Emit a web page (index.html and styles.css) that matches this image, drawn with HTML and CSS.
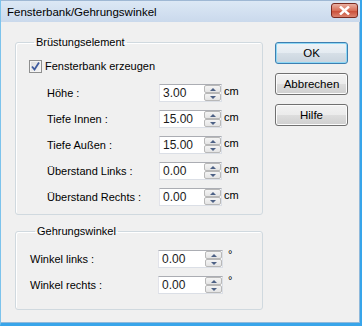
FILE: index.html
```html
<!DOCTYPE html>
<html lang="de">
<head>
  <meta charset="UTF-8" />
  <title>Fensterbank/Gehrungswinkel</title>
  <link rel="stylesheet" href="styles.css">
</head>
<body>
  <div class="window">
    <div class="titlebar">
      <span class="title">Fensterbank/Gehrungswinkel</span>
      <span class="close">
        <svg width="11" height="9" viewBox="0 0 11 9"><path d="M1 0.5 L10 8.5 M10 0.5 L1 8.5" stroke="#fff" stroke-width="2.4" /></svg>
      </span>
    </div>

    <div class="content">
      <div class="groups">
        <fieldset class="group group-main">
          <legend>Brüstungselement</legend>
          <label class="check">
            <span class="box">
              <svg width="9" height="9" viewBox="0 0 9 9"><path d="M1 4.5 L3.5 7.5 L8 0.5" fill="none" stroke="#3d5a9e" stroke-width="1.8" /></svg>
            </span>
            Fensterbank erzeugen
          </label>
          <div class="rows">
            <div class="row">
              <span class="lbl">Höhe :</span>
              <div class="spin"><span class="val">3.00</span><span class="arrows"><span class="arr up"></span><span class="arr down"></span></span></div>
              <span class="unit">cm</span>
            </div>
            <div class="row">
              <span class="lbl">Tiefe Innen :</span>
              <div class="spin"><span class="val">15.00</span><span class="arrows"><span class="arr up"></span><span class="arr down"></span></span></div>
              <span class="unit">cm</span>
            </div>
            <div class="row">
              <span class="lbl">Tiefe Außen :</span>
              <div class="spin"><span class="val">15.00</span><span class="arrows"><span class="arr up"></span><span class="arr down"></span></span></div>
              <span class="unit">cm</span>
            </div>
            <div class="row">
              <span class="lbl">Überstand Links :</span>
              <div class="spin"><span class="val">0.00</span><span class="arrows"><span class="arr up"></span><span class="arr down"></span></span></div>
              <span class="unit">cm</span>
            </div>
            <div class="row">
              <span class="lbl">Überstand Rechts :</span>
              <div class="spin"><span class="val">0.00</span><span class="arrows"><span class="arr up"></span><span class="arr down"></span></span></div>
              <span class="unit">cm</span>
            </div>
          </div>
        </fieldset>

        <fieldset class="group group-angle">
          <legend>Gehrungswinkel</legend>
          <div class="rows">
            <div class="row">
              <span class="lbl">Winkel links :</span>
              <div class="spin"><span class="val">0.00</span><span class="arrows"><span class="arr up"></span><span class="arr down"></span></span></div>
              <span class="unit deg">°</span>
            </div>
            <div class="row">
              <span class="lbl">Winkel rechts :</span>
              <div class="spin"><span class="val">0.00</span><span class="arrows"><span class="arr up"></span><span class="arr down"></span></span></div>
              <span class="unit deg">°</span>
            </div>
          </div>
        </fieldset>
      </div>

      <div class="buttons">
        <button class="btn btn-default">OK</button>
        <button class="btn">Abbrechen</button>
        <button class="btn">Hilfe</button>
      </div>
    </div>
  </div>
</body>
</html>
```

FILE: styles.css
```css
* {
  box-sizing: border-box;
}

body {
  margin: 0;
  font-family: 'Liberation Sans', Arial, sans-serif;
  font-size: 11px;
  color: #000;
  background: #f0f0f0;
}

.window {
  width: 362px;
  height: 326px;
  background: #f0f0f0;
  border-left: 1px solid #7cc3ec;
  border-right: 2px solid #38a5ea;
  border-bottom: 3px solid #38a5ea;
  box-shadow: inset -1px -1px 0 #8fb9db;
}

.titlebar {
  height: 22px;
  display: flex;
  align-items: center;
  justify-content: space-between;
  padding: 0 2px 0 6px;
  background: linear-gradient(#dce8f5, #cad9ec);
  border-top: 1px solid #9fb8d4;
}

.title {
  font-size: 11.5px;
  color: #000;
}

.close {
  width: 27px;
  height: 15px;
  margin-top: -3px;
  display: flex;
  align-items: center;
  justify-content: center;
  border: 1px solid #7a2a20;
  border-radius: 3px;
  background: linear-gradient(#eab0a2, #d86f58 50%, #c84a34 51%, #dc8470);
}

.content {
  display: flex;
  padding: 13px 0 0 14px;
}

.groups {
  width: 248px;
}

.group {
  margin: 0;
  padding: 0;
  border: 1px solid #d0d9df;
  border-radius: 3px;
  box-shadow: inset 1px 1px 0 #fff;
}

.group legend {
  margin-left: 5px;
  padding: 0 2px;
  line-height: 14px;
}

.group-main {
  height: 180px;
  padding: 10px 0 0 13px;
}

.group-angle {
  margin-top: 9px;
  height: 86px;
  padding: 12px 0 0 14px;
}

.check {
  display: flex;
  align-items: center;
  height: 14px;
  gap: 3px;
}

.box {
  width: 13px;
  height: 13px;
  display: flex;
  align-items: center;
  justify-content: center;
  border: 1px solid #8e8f8f;
  background: linear-gradient(135deg, #dcdcdc, #f6f6f6);
  box-shadow: inset 0 0 0 1px #f4f4f4;
}

.rows {
  display: flex;
  flex-direction: column;
  gap: 8px;
}

.group-main .rows {
  margin-top: 11px;
  padding-left: 18px;
}

.row {
  display: flex;
  height: 18px;
}

.lbl {
  line-height: 18px;
}

.group-main .lbl {
  width: 112px;
}

.group-angle .lbl {
  width: 128px;
}

.spin {
  width: 63px;
  height: 18px;
  display: flex;
  background: #fff;
  border: 1px solid #dbdfe6;
  border-top-color: #abadb3;
  border-left-color: #e2e3ea;
}

.group-angle .spin {
  width: 65px;
}

.val {
  flex: 1;
  padding-left: 3px;
  font-size: 12px;
  line-height: 16px;
  color: #1a1a1a;
}

.arrows {
  width: 17px;
  display: flex;
  flex-direction: column;
}

.arr {
  flex: 1;
  display: flex;
  align-items: center;
  justify-content: center;
  border: 1px solid #b8b8b8;
  border-radius: 2px;
  background: linear-gradient(#f4f4f4, #e4e4e4);
}

.arr::after {
  content: "";
  border-left: 3px solid transparent;
  border-right: 3px solid transparent;
}

.up::after {
  border-bottom: 3px solid #4d6185;
}

.down::after {
  border-top: 3px solid #4d6185;
}

.unit {
  margin-left: 2px;
  line-height: 14px;
}

.deg {
  margin-left: 5px;
  line-height: 8px;
}

.buttons {
  display: flex;
  flex-direction: column;
  gap: 9px;
  margin: 7px 0 0 12px;
}

.btn {
  width: 73px;
  height: 22px;
  padding: 0;
  font-family: 'Liberation Sans', Arial, sans-serif;
  font-size: 11.5px;
  color: #000;
  border: 1px solid #707070;
  border-radius: 3px;
  background: linear-gradient(#f2f2f2, #ebebeb 50%, #dddddd 51%, #cfcfcf);
  box-shadow: inset 0 0 0 1px #fcfcfc;
}

.btn-default {
  border-color: #3c7fb1;
  box-shadow: inset 0 0 0 1px #8fd8f5;
  background: linear-gradient(#eef3f7, #e4ebf1 50%, #d6dfe7 51%, #c9d4de);
}
```
